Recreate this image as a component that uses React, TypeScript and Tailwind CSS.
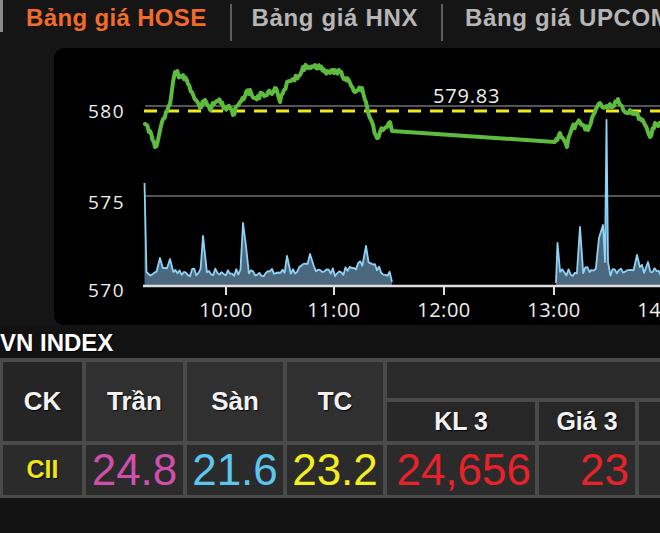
import React from "react";

function rng(seed: number) {
  let s = seed;
  return () => {
    s = (s * 9301 + 49297) % 233280;
    return s / 233280;
  };
}

type P = [number, number];

const greenA: P[] = [
  [145, 124], [150, 131], [155, 147], [158, 140], [162, 122], [166, 112], [170, 104], [173, 82], [175, 72], [180, 76], [183, 75],
  [188, 84], [192, 92], [196, 100], [200, 108], [205, 100], [210, 110], [214, 104], [218, 101], [225, 107], [230, 108], [233, 115],
  [237, 106], [240, 102], [245, 96], [250, 90], [254, 98], [258, 96], [263, 94], [268, 92], [272, 94], [275, 88], [280, 102],
  [284, 90], [287, 82], [293, 79], [300, 75], [303, 67], [308, 68], [315, 65], [320, 68], [325, 72], [330, 73], [335, 70], [340, 72],
  [345, 78], [350, 83], [355, 92], [358, 90], [362, 88], [366, 102], [368, 112], [372, 122], [377, 138], [380, 132], [383, 130],
  [387, 127], [390, 122], [392, 131],
];
const greenB: P[] = [
  [555, 142], [560, 133], [564, 140], [567, 147], [570, 134], [572, 128], [576, 124], [580, 122], [584, 126], [588, 130],
  [592, 118], [595, 112], [600, 103], [605, 107], [610, 104], [614, 106], [618, 99], [622, 106], [625, 112], [630, 110], [635, 114],
  [640, 118], [645, 125], [650, 137], [655, 123], [658, 126], [663, 124],
];

function jitter(keys: P[], seed: number, amp: number): P[] {
  const r = rng(seed);
  const out: P[] = [];
  for (let i = 0; i < keys.length - 1; i++) {
    const [x0, y0] = keys[i];
    const [x1, y1] = keys[i + 1];
    const n = Math.max(1, Math.round((x1 - x0) / 1.4));
    for (let k = 0; k < n; k++) {
      const t = k / n;
      const x = x0 + (x1 - x0) * t;
      const y = y0 + (y1 - y0) * t + (k === 0 ? 0 : (r() - 0.5) * amp);
      out.push([x, y]);
    }
  }
  out.push(keys[keys.length - 1]);
  return out;
}

function toPath(pts: P[]) {
  return pts.map((p, i) => `${i === 0 ? "M" : "L"}${p[0].toFixed(1)} ${p[1].toFixed(1)}`).join(" ");
}

function volume(
  x0: number,
  x1: number,
  spikes: P[],
  bumps: [number, number, number][],
  seed: number
): P[] {
  const r = rng(seed);
  const pts: P[] = [];
  for (let x = x0; x <= x1; x += 2.1) {
    let y = 276.5 - r() * 8;
    for (const [bx, bw, ba] of bumps) y -= ba * Math.exp(-(((x - bx) / bw) ** 2));
    if (!spikes.some(([sx]) => Math.abs(x - sx) < 2.2)) pts.push([x, y]);
  }
  for (const s of spikes) pts.push(s);
  pts.sort((a, b) => a[0] - b[0]);
  return pts;
}

const volA = volume(
  146,
  390,
  [
    [144.5, 183],
    [146.5, 272],
    [160, 258],
    [170, 259],
    [203, 236],
    [243, 223],
    [246, 246],
    [287, 256],
    [310, 254],
    [366, 246],
    [392, 282],
  ],
  [
    [168, 8, 6],
    [310, 14, 6],
    [365, 14, 9],
  ],
  7
);
const volB = volume(
  558,
  662,
  [
    [556, 283],
    [557.5, 243],
    [580, 227],
    [599, 238],
    [603, 225],
    [605, 262],
    [606.5, 120],
    [608, 262],
    [637, 255],
    [648, 262],
  ],
  [
    [590, 10, 4],
    [640, 12, 4],
  ],
  13
);

function areaPath(pts: P[]) {
  const first = pts[0];
  const last = pts[pts.length - 1];
  return `M${first[0]} 285 ` + pts.map((p) => `L${p[0].toFixed(1)} ${p[1].toFixed(1)}`).join(" ") + ` L${last[0]} 285 Z`;
}

const gA = jitter(greenA, 3, 6);
const gB = jitter(greenB, 5, 6);
const greenPath = toPath([...gA, ...gB]);

function Chart() {
  const ticks = [
    { x: 226, l: "10:00" },
    { x: 334, l: "11:00" },
    { x: 444, l: "12:00" },
    { x: 554, l: "13:00" },
    { x: 664, l: "14:00" },
  ];
  return (
    <svg width="606" height="277" viewBox="54 48 606 277" style={{ display: "block" }}>
      <line x1="145" y1="106" x2="660" y2="106" stroke="#6f6f6f" strokeWidth="1.5" />
      <line x1="145" y1="196" x2="660" y2="196" stroke="#6f6f6f" strokeWidth="1.5" />
      <path d={areaPath(volA)} fill="#4b687e" />
      <path d={areaPath(volB)} fill="#4b687e" />
      <path d={toPath(volA)} fill="none" stroke="#8fd2f5" strokeWidth="1.8" strokeLinejoin="round" />
      <path d={toPath(volB)} fill="none" stroke="#8fd2f5" strokeWidth="1.8" strokeLinejoin="round" />
      <line x1="144" y1="111" x2="660" y2="111" stroke="#f2e91a" strokeWidth="3" strokeDasharray="13 9" />
      <path d={greenPath} fill="none" stroke="#5dbb3e" strokeWidth="4" strokeLinejoin="round" strokeLinecap="round" />
      <line x1="143" y1="286" x2="660" y2="286" stroke="#dedede" strokeWidth="2.5" />
      {ticks.map((t) => (
        <line key={t.x} x1={t.x} y1="286" x2={t.x} y2="295" stroke="#dedede" strokeWidth="2" />
      ))}
      <g fontFamily="'Open Sans', 'DejaVu Sans', sans-serif" fill="#efefef">
        <text x="125" y="118" fontSize="19" textAnchor="end" letterSpacing="1.5">580</text>
        <text x="125" y="209" fontSize="19" textAnchor="end" letterSpacing="1.5">575</text>
        <text x="125" y="297" fontSize="19" textAnchor="end" letterSpacing="1.5">570</text>
        <text x="433" y="103" fontSize="20" letterSpacing="0.8">579.83</text>
        {ticks.map((t) => (
          <text key={t.l} x={t.x} y="317" fontSize="20" textAnchor="middle" letterSpacing="0.5">
            {t.l}
          </text>
        ))}
      </g>
    </svg>
  );
}

const hdr = "flex items-center justify-center text-[#f2f2f2] font-bold [text-shadow:1px_1px_1px_#000]";

export default function App() {
  return (
    <div className="w-[660px] h-[533px] overflow-hidden bg-[#151515] flex flex-col font-['Liberation_Sans',Arial,sans-serif]">
      {/* tabs */}
      <div className="h-[48px] flex items-start shrink-0 overflow-hidden">
        <div className="shrink-0 w-[3px] h-[32px] bg-[#8a8a8a]" />
        <span className="shrink-0 ml-[23px] pt-[4px] leading-[28px] text-[24px] font-bold tracking-[0.35px] text-[#f26b2b] whitespace-nowrap">
          Bảng giá HOSE
        </span>
        <div className="shrink-0 ml-[23px] mt-[4px] w-[2px] h-[37px] bg-[#5e5e5e]" />
        <span className="shrink-0 ml-[20px] pt-[4px] leading-[28px] text-[24px] font-bold tracking-[0.65px] text-[#b6b6b6] whitespace-nowrap">
          Bảng giá HNX
        </span>
        <div className="shrink-0 ml-[23px] mt-[4px] w-[2px] h-[37px] bg-[#5e5e5e]" />
        <span className="shrink-0 ml-[22px] pt-[4px] leading-[28px] text-[24px] font-bold tracking-[0.65px] text-[#b6b6b6] whitespace-nowrap">
          Bảng giá UPCOM
        </span>
      </div>

      {/* chart */}
      <div className="ml-[54px] h-[277px] shrink-0 bg-black rounded-l-[10px] overflow-hidden">
        <Chart />
      </div>

      {/* title */}
      <div className="h-[33px] shrink-0 bg-[#121212] flex items-center pt-[3px] text-[24px] font-bold text-white leading-none [text-shadow:1px_1px_1px_#000]">
        VN INDEX
      </div>

      {/* table */}
      <div className="shrink-0 bg-[#4a4a4a] pt-[4px] pb-[3px] pl-[3px] grid grid-cols-[79px_97px_96px_96px_148px_96px_1fr] grid-rows-[36px_39px_50px] gap-[4px]">
        <div className={`${hdr} row-span-2 bg-[#252525] text-[26px]`}>CK</div>
        <div className={`${hdr} row-span-2 bg-[#303030] text-[26px]`}>Trần</div>
        <div className={`${hdr} row-span-2 bg-[#303030] text-[26px]`}>Sàn</div>
        <div className={`${hdr} row-span-2 bg-[#303030] text-[26px]`}>TC</div>
        <div className="col-span-3 bg-[#2a2a2a]" />
        <div className={`${hdr} bg-[#272727] text-[25px]`}>KL 3</div>
        <div className={`${hdr} bg-[#272727] text-[25px]`}>Giá 3</div>
        <div className="bg-[#272727]" />

        <div className="flex items-center justify-center bg-[#2b2b2b] text-[25px] font-bold text-[#efe41c] [text-shadow:1px_1px_1px_#000]">
          CII
        </div>
        <div className="flex items-center justify-center bg-[#2b2b2b] text-[44px] leading-none text-[#cf4fac]">24.8</div>
        <div className="flex items-center justify-center bg-[#2b2b2b] text-[44px] leading-none text-[#5cc6ef]">21.6</div>
        <div className="flex items-center justify-center bg-[#2b2b2b] text-[44px] leading-none text-[#f4ee1f]">23.2</div>
        <div className="flex items-center justify-end pr-[4px] bg-[#2b2b2b] text-[44px] leading-none text-[#e8222a]">24,656</div>
        <div className="flex items-center justify-end pr-[6px] bg-[#2b2b2b] text-[44px] leading-none text-[#e8222a]">23</div>
        <div className="bg-[#2b2b2b]" />
      </div>

      <div className="flex-1 bg-[#131313]" />
    </div>
  );
}
